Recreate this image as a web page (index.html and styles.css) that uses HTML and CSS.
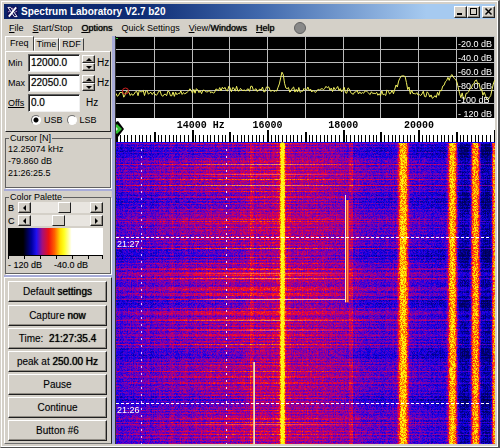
FILE: index.html
```html
<!DOCTYPE html>
<html lang="en">
<head>
<meta charset="utf-8">
<title>Spectrum Laboratory V2.7 b20</title>
<link rel="stylesheet" href="styles.css">
</head>
<body>
<div class="window">
  <header class="titlebar">
    <svg class="logo" viewBox="0 0 12 12" aria-hidden="true"><rect width="12" height="12" fill="#101058"/><path d="M1 1h3l7 10H8z" fill="none" stroke="#fff"/><path d="M10 1L2 11" stroke="#fff" stroke-width="2"/><path d="M1 6l2-1M9 6l2-1M5 2h2" stroke="#c8a0c8"/></svg>
    <h1>Spectrum Laboratory V2.7 b20</h1>
    <div class="caption">
      <button aria-label="Minimize"><svg viewBox="0 0 11 9"><path d="M2 7h5" stroke="#000" stroke-width="2"/></svg></button>
      <button aria-label="Maximize"><svg viewBox="0 0 11 9"><path d="M2 1.5h7M2.500 1v7M8.500 1v7M2 7.500h7" stroke="#000"/></svg></button>
      <button class="close" aria-label="Close"><svg viewBox="0 0 11 9"><path d="M2.500 1.500l6 6M8.500 1.500l-6 6" stroke="#000" stroke-width="1.500"/></svg></button>
    </div>
  </header>
  <nav class="menu">
    <a href="#"><u>F</u>ile</a>
    <a href="#"><u>S</u>tart/Stop</a>
    <a href="#" class="strong"><u>O</u>ptions</a>
    <a href="#">Quick Settings</a>
    <a href="#"><u>V</u>iew/<span class="strong">Windows</span></a>
    <a href="#" class="strong"><u>H</u>elp</a>
    <span class="lamp"></span>
  </nav>
  <main class="body">
    <aside class="side">
      <section class="freq">
        <div class="tabs"><button class="active">Freq</button><button>Time</button><button>RDF</button></div>
        <div class="tabpage">
          <div class="row"><label for="min">Min</label><input id="min" type="text" value="12000.0"><span class="spin"><button aria-label="Min up"><i class="up"></i></button><button aria-label="Min down"><i class="down"></i></button></span><span>Hz</span></div>
          <div class="row"><label for="max">Max</label><input id="max" type="text" value="22050.0"><span class="spin"><button aria-label="Max up"><i class="up"></i></button><button aria-label="Max down"><i class="down"></i></button></span><span>Hz</span></div>
          <div class="row"><label for="offs"><u>Offs</u></label><input id="offs" type="text" value="0.0"><span class="unit">Hz</span></div>
          <div class="radios"><label><input type="radio" name="sb" checked>USB</label><label><input type="radio" name="sb">LSB</label></div>
        </div>
      </section>
      <section class="panel">
        <fieldset class="cursor"><legend>Cursor [N]</legend>
          <div>12.25074 kHz</div><div>-79.860 dB</div><div>21:26:25.5</div>
        </fieldset>
      </section>
      <section class="panel">
        <fieldset class="palette"><legend>Color Palette</legend>
          <div class="scroll"><label for="bright">B</label><button aria-label="Less brightness"><i class="left"></i></button><input id="bright" type="range" value="59"><button aria-label="More brightness"><i class="right"></i></button></div>
          <div class="scroll"><label for="contrast">C</label><button aria-label="Less contrast"><i class="left"></i></button><input id="contrast" type="range" value="45"><button aria-label="More contrast"><i class="right"></i></button></div>
          <div class="strip"></div>
          <div class="ticks"></div>
          <div class="range"><span>- 120 dB</span><span>-40.0 dB</span></div>
        </fieldset>
      </section>
      <section class="actions">
        <button>Default <span class="strong">settings</span></button>
        <button>Capture <span class="strong">now</span></button>
        <button>Time: &nbsp;<span class="strong">21:27:35.4</span></button>
        <button>peak at <span class="strong">250.00 Hz</span></button>
        <button>Pause</button>
        <button>Continue</button>
        <button>Button #6</button>
      </section>
    </aside>
    <section class="plots">
      <div class="spectrum">
        <canvas id="spectrum"></canvas>
        <div class="levels"><span>-20.0 dB</span><span>-40.0 dB</span><span>-60.0 dB</span><span>-80.0 dB</span><span>-100 dB</span><span>- 120 dB</span></div>
      </div>
      <div class="ruler">
        <canvas id="ruler"></canvas>
        <svg class="scale">
          <text x="16%" y="10">14000 Hz</text>
          <text x="36%" y="10">16000</text>
          <text x="56%" y="10">18000</text>
          <text x="76%" y="10">20000</text>
          <path d="M0 4l2-1 6 8-6 8-2-1z" fill="#000"/><path d="M0 7l1-1 5 5-5 5-1-1z" fill="#30c030"/><path d="M0 9l2 2-2 2z" fill="#d8f0d8"/>
        </svg>
      </div>
      <div class="waterfall">
        <canvas id="waterfall"></canvas>
        <span class="stamp first">21:27</span>
        <span class="stamp second">21:26</span>
      </div>
    </section>
  </main>
</div>
<script src="plot.js"></script>
</body>
</html>
```
FILE: styles.css
```css
* { box-sizing: border-box; }
body { margin: 0; background: #505050; font: 10px/12px "Liberation Sans", Arial, sans-serif; color: #000; }
button, input { font: inherit; color: inherit; margin: 0; padding: 0; }
button { background: #d4d0c8; border: 1px solid; border-color: #fff #202020 #202020 #fff; box-shadow: inset -1px -1px #908c84; border-radius: 0; }
canvas { display: block; position: absolute; inset: 0; width: 100%; height: 100%; }
.strong { text-shadow: 0 0 1px #000; }

.window { height: 100vh; display: flex; flex-direction: column; padding: 3px; background: #d4d0c8; border: 1px solid; border-color: #d4d0c8 #505050 #505050 #d4d0c8; border-right-width: 2px; box-shadow: inset 1px 1px #fff, inset -1px -1px #fff; }
.titlebar { flex: none; display: flex; align-items: center; gap: 3px; height: 15px; padding: 0 0 0 3px; background: linear-gradient(90deg, #0a246a, #0e2c74 28%, #4068ac 52%, #a6caf0 86%); }
.logo { width: 11px; height: 12px; }
.titlebar h1 { flex: 1; margin: 0; color: #fff; font: bold 10px/14px "Liberation Sans", Arial, sans-serif; }
.caption { display: flex; }
.caption button { width: 13px; height: 12px; }
.caption svg { display: block; width: 11px; height: 9px; }
.caption .close { margin-left: 2px; }
.menu { flex: none; display: flex; align-items: center; gap: 9px; height: 17px; padding: 0 5px; font-size: 9px; }
.menu a { color: #000; text-decoration: none; }
.lamp { width: 12px; height: 12px; margin-left: 10px; border: 1px solid #606060; border-radius: 50%; background: #888; }

.body { flex: 1; min-height: 0; display: grid; grid-template-columns: 108px 1fr; }
.side { display: flex; flex-direction: column; min-height: 0; background: #d4d0c8; }
.freq { flex: none; height: 96px; padding-left: 1px; display: flex; flex-direction: column; }
.tabs { display: flex; align-items: flex-end; height: 15px; }
.tabs button { height: 13px; padding: 0 2px; line-height: 11px; border-width: 1px; border-color: #fff #404040 transparent #fff; box-shadow: none; font-size: 9px; }
.tabs button + button { padding: 0 2px; }
.tabs .active { height: 15px; padding: 0 4px; }
.tabpage { flex: 1; display: flex; flex-direction: column; gap: 2px; padding: 2px 0 0 2px; border: 1px solid; border-color: #fff #202020 #202020 #fff; margin-right: 1px; }
.row { display: flex; align-items: center; height: 18px; gap: 2px; }
.row label { width: 18px; flex: none; font-size: 9px; }
.row input { width: 52px; height: 18px; flex: none; padding: 0 1px 1px 2px; background: #fff; border: 1px solid; border-color: #606060 #f0f0f0 #f0f0f0 #606060; border-radius: 0; box-shadow: inset 1px 1px #202020; text-shadow: 0 0 1px #808080; outline: 0; }
.spin { display: flex; flex-direction: column; width: 13px; flex: none; }
.spin button { height: 8px; display: flex; align-items: center; justify-content: center; }
.spin i { border: 3px solid transparent; }
.spin .up { border-top: 0; border-bottom-color: #000; }
.spin .down { border-bottom: 0; border-top-color: #000; }
.unit { margin-left: 4px; }
.radios { display: flex; gap: 4px; padding-left: 23px; }
.radios label { display: flex; align-items: center; gap: 3px; font-size: 9px; }
.radios input { appearance: none; width: 10px; height: 10px; border: 1px solid #707070; border-right-color: #fff; border-bottom-color: #fff; border-radius: 50%; background: #fff; }
.radios input:checked { background: radial-gradient(circle, #000 0 2px, #fff 3px); }

.panel { flex: none; padding: 1px 1px 1px; border-bottom: 2px solid #a8acd8; }
fieldset { margin: 0; padding: 0 2px; border: 1px solid #606060; box-shadow: 1px 1px #fff; min-width: 0; }
legend { margin-left: 1px; padding: 0 1px; line-height: 10px; font-size: 9px; }
.cursor { height: 55px; font-size: 9px; }
.cursor div { line-height: 12px; }
.palette { height: 82px; }
.scroll { display: flex; align-items: center; height: 11px; margin: 0 5px 2px 0; }
.scroll label { width: 10px; font-size: 9px; text-shadow: 0 0 1px #808080; }
.scroll button { width: 13px; height: 11px; flex: none; display: flex; align-items: center; justify-content: center; }
.scroll i { border: 3px solid transparent; }
.scroll .left { border-left: 0; border-right-color: #000; }
.scroll .right { border-right: 0; border-left-color: #000; }
.scroll input { appearance: none; flex: 1; min-width: 0; width: 20px; height: 11px; background: #e8e5e0; }
.scroll input::-webkit-slider-thumb { appearance: none; width: 13px; height: 11px; background: #d4d0c8; border: 1px solid; border-color: #fff #202020 #202020 #fff; }
.strip { height: 27px; margin-right: 5px; background: linear-gradient(90deg, #000 16%, #0000a0 25%, #2010f0 30%, #a01080 36%, #f01010 43%, #ff6000 49%, #ffe000 55%, #ffff20 59%, #fff 67%); }
.ticks { height: 4px; margin-right: 5px; border-top: 1px solid #000; border-right: 1px solid #000; background: repeating-linear-gradient(90deg, #000 0 1px, transparent 1px 16px); }
.range { display: flex; gap: 12px; white-space: nowrap; font-size: 9px; line-height: 12px; text-shadow: 0 0 1px #a0a0a0; }

.actions { flex: 1; display: flex; flex-direction: column; gap: 2px; min-height: 0; padding: 3px 4px 2px 3px; border: 1px solid; border-color: #fff #202020 #707070 #fff; }
.actions button { flex: 1; min-height: 0; white-space: pre; text-shadow: 0 0 1px #a0a0a0; }
.actions .strong { text-shadow: 0 0 1px #000; }
.actions button:first-child { margin-bottom: 1px; }

.plots { display: flex; flex-direction: column; min-width: 0; min-height: 0; border-left: 3px solid #a8acd8; box-shadow: inset 1px 0 #303030; padding-left: 1px; }
.spectrum { position: relative; flex: none; height: 82px; background: #000; }
.levels { position: absolute; top: 1px; right: 0; width: 37px; display: grid; grid-auto-rows: 14px; color: #fff; font-size: 9px; line-height: 14px; white-space: nowrap; }
.ruler { position: relative; flex: none; height: 24px; background: #fff; }
.scale { position: absolute; inset: 0; width: 100%; height: 100%; font: bold 10px "Liberation Mono", monospace; }
.waterfall { position: relative; flex: 1; min-height: 0; background: #2000a0; }
.stamp { position: absolute; left: 1px; color: #fff; font-size: 9px; line-height: 10px; }
.first { top: 32%; }
.second { top: 87%; }
```
FILE: plot.js
```js
// Seeded generator keeps the simulated signal stable between reloads.
let seed = 4711;
function rnd() {
  seed = (seed * 1664525 + 1013904223) >>> 0;
  return seed / 4294967296;
}
function prepare(id) {
  const c = document.getElementById(id);
  c.width = c.clientWidth;
  c.height = c.clientHeight;
  return [c.getContext('2d'), c.width, c.height];
}
function lerp(points, x) {
  for (let i = 1; i < points.length; i++) {
    if (x <= points[i][0]) {
      const a = points[i - 1], b = points[i], t = (x - a[0]) / (b[0] - a[0]);
      return a[1] + (b[1] - a[1]) * t;
    }
  }
  return points[points.length - 1][1];
}
const SPAN = 380;

function drawSpectrum() {
  const [g, w, h] = prepare('spectrum');
  const k = w / SPAN;
  g.fillStyle = '#000';
  g.fillRect(0, 0, w, h);
  g.fillStyle = '#bcbcbc';
  for (let i = 1; i <= 10; i++) g.fillRect(Math.round(i * 37.85 * k), 0, 1, h);
  for (let i = 1; i <= 5; i++) g.fillRect(0, Math.round(i * h / 6) - 1, w, 1);
  g.fillRect(0, 0, w, 1);
  const trace = [[0, 60], [15, 57], [55, 58], [80, 55], [90, 57], [110, 53], [162, 53], [164, 47], [167, 34], [169, 47], [171, 54],
    [225, 53], [240, 56], [258, 58], [278, 56], [282, 49], [285, 41], [288, 39], [290, 41], [292, 50], [295, 56], [310, 58],
    [321, 60], [329, 51], [332, 45], [337, 40], [342, 47], [345, 59], [350, 61], [355, 53], [361, 42], [366, 54], [371, 62], [375, 64], [379, 42]];
  g.strokeStyle = '#f0f060';
  g.lineWidth = 1;
  g.beginPath();
  for (let x = 0; x < SPAN; x += 1.3) {
    const quiet = (x > 162 && x < 171) || (x > 283 && x < 292);
    g.lineTo(x * k, (lerp(trace, x) + (rnd() - 0.5) * (quiet ? 1 : 6)) * h / 82);
  }
  g.stroke();
  g.strokeStyle = '#d02020';
  g.beginPath();
  g.arc(9.5 * k, 55, 3, 0, 7);
  g.stroke();
  g.fillStyle = '#30c030';
  g.fillRect(0, 2, 2, 1);
}

function drawRuler() {
  const [g, w, h] = prepare('ruler');
  g.fillStyle = '#000';
  for (let i = 0; i <= 100; i++) {
    const len = i % 20 === 0 ? 12 : i % 10 === 0 ? 10 : 7;
    g.fillRect(Math.round(i * 3.785 * w / SPAN), h - len, i % 10 ? 1 : 2, len);
  }
}

const RAMP = [[0, 0, 0, 30], [0.2, 0, 0, 120], [0.32, 16, 0, 235], [0.42, 105, 0, 190], [0.52, 190, 0, 110], [0.6, 250, 10, 30],
  [0.7, 255, 100, 0], [0.82, 255, 225, 0], [0.92, 255, 255, 30], [1, 255, 255, 130]];
function colour(v) {
  v = Math.max(0, Math.min(0.999, v));
  let i = 1;
  while (RAMP[i][0] < v) i++;
  const a = RAMP[i - 1], b = RAMP[i], t = (v - a[0]) / (b[0] - a[0]);
  return [1, 2, 3].map(n => a[n] + (b[n] - a[n]) * t);
}

function drawWaterfall() {
  const [g, w, h] = prepare('waterfall');
  const img = g.createImageData(w, h);
  const floor = [[0, 0.37], [50, 0.41], [100, 0.45], [150, 0.48], [190, 0.48], [225, 0.44], [260, 0.39], [320, 0.34], [337, 0.3], [346, 0.23], [380, 0.2]];
  const burst = [[0, 0.6], [60, 0.8], [110, 1], [165, 1], [190, 0.8], [230, 0.7], [290, 0.7], [380, 0.7]];
  const strong = [22, 32, 37, 43, 54, 77, 81, 106, 126, 131, 136, 146, 152, 156, 170, 177, 187, 191, 201, 228, 233, 239, 275, 281, 291];
  const cool = [9, 57, 112, 160, 211, 256];
  const column = Array.from({ length: w }, () => (rnd() - 0.5) * 0.05);
  const carriers = [[166.5, 2.4, 0.38], [287.5, 4.6, 0.36], [337, 4.4, 0.41], [360, 4.4, 0.46], [379, 2.5, 0.46]];
  for (let y = 0; y < h; y++) {
    const ry = y * 301 / h;
    let row = (rnd() - 0.5) * 0.07;
    if (Math.floor(ry) % 3 === 0) row += 0.03 + 0.1 * rnd();
    for (const s of strong) if (Math.abs(ry - s) < 0.6) row += 0.11;
    let chill = 0;
    for (const c of cool) chill += 0.08 * Math.exp(-(((ry - c) / 6) ** 2));
    for (let x = 0; x < w; x++) {
      const f = x * SPAN / w;
      let carrier = 0;
      for (const [c, width, gain] of carriers) {
        carrier += gain * Math.exp(-(((f - c) / width) ** 4));
        carrier += 0.08 * Math.exp(-(((f - c) / (width * 1.8)) ** 2));
      }
      const calm = carrier > 0.2 ? 0.2 : 1;
      let v = lerp(floor, f) + carrier + calm * (row * lerp(burst, f) + column[x] - chill * (f < 130 || f > 230 ? 1 : 0.4));
      v += (rnd() - 0.5) * (carrier > 0.2 ? 0.24 : 0.14);
      if (Math.abs(f - 166.5) < 1.5) v = Math.max(v, 0.84);
      if (Math.abs(f - 235) < 2) v += 0.08;
      if (Math.abs(f - 136) < 2) v += 0.06;
      if (Math.abs(f - 304) < 0.6 || Math.abs(f - 56) < 0.6) v += 0.07;
      if (y < 1) v = 0.32;
      const p = (y * w + x) * 4, rgb = colour(v);
      img.data[p] = rgb[0];
      img.data[p + 1] = rgb[1];
      img.data[p + 2] = rgb[2];
      img.data[p + 3] = 255;
    }
  }
  g.putImageData(img, 0, 0);
  const kx = w / SPAN, ky = h / 301;
  const bar = (x, y, bw, bh, fill) => {
    g.fillStyle = fill;
    g.fillRect(Math.round(x * kx), Math.round(y * ky), bw, bh);
  };
  bar(230, 53, 1, 107 * ky, '#ffe8d0');
  bar(231, 58, 1, 102 * ky, '#e03030');
  bar(232, 58, 1, 102 * ky, '#ff9040');
  bar(233, 58, 1, 102 * ky, '#e04040');
  bar(137, 219, 1, 82 * ky, '#e8b090');
  bar(138, 219, 1, 82 * ky, '#f0e0c0');
  const streak = g.createLinearGradient(75 * kx, 0, 235 * kx, 0);
  streak.addColorStop(0, 'rgba(255,230,200,0)');
  streak.addColorStop(0.3, 'rgba(255,230,200,.8)');
  streak.addColorStop(1, 'rgba(255,200,190,.8)');
  bar(75, 156, 155 * kx, 1, streak);
  for (const y of [22, 32, 43, 131, 136, 177, 187, 281]) {
    const s = g.createLinearGradient(60 * kx, 0, 250 * kx, 0);
    s.addColorStop(0, 'rgba(255,130,170,0)');
    s.addColorStop(0.5, 'rgba(255,150,170,.45)');
    s.addColorStop(1, 'rgba(255,100,150,0)');
    bar(60, y, 190 * kx, 1, s);
  }
  bar(165, 0, 3, h, 'rgba(255,240,0,.6)');
  for (let y = 7; y < h; y += 7) {
    bar(25, y / ky, 1, 2, '#e0c8ff');
    bar(110, y / ky, 1, 2, '#ffe0f0');
  }
  for (const y of [95, 260]) for (let x = 0; x < w - 4; x += 5) bar(x / kx, y, 3, 1, '#fff');
}

function drawAll() {
  seed = 4711;
  drawSpectrum();
  drawRuler();
  drawWaterfall();
}
drawAll();
window.addEventListener('resize', drawAll);
```
